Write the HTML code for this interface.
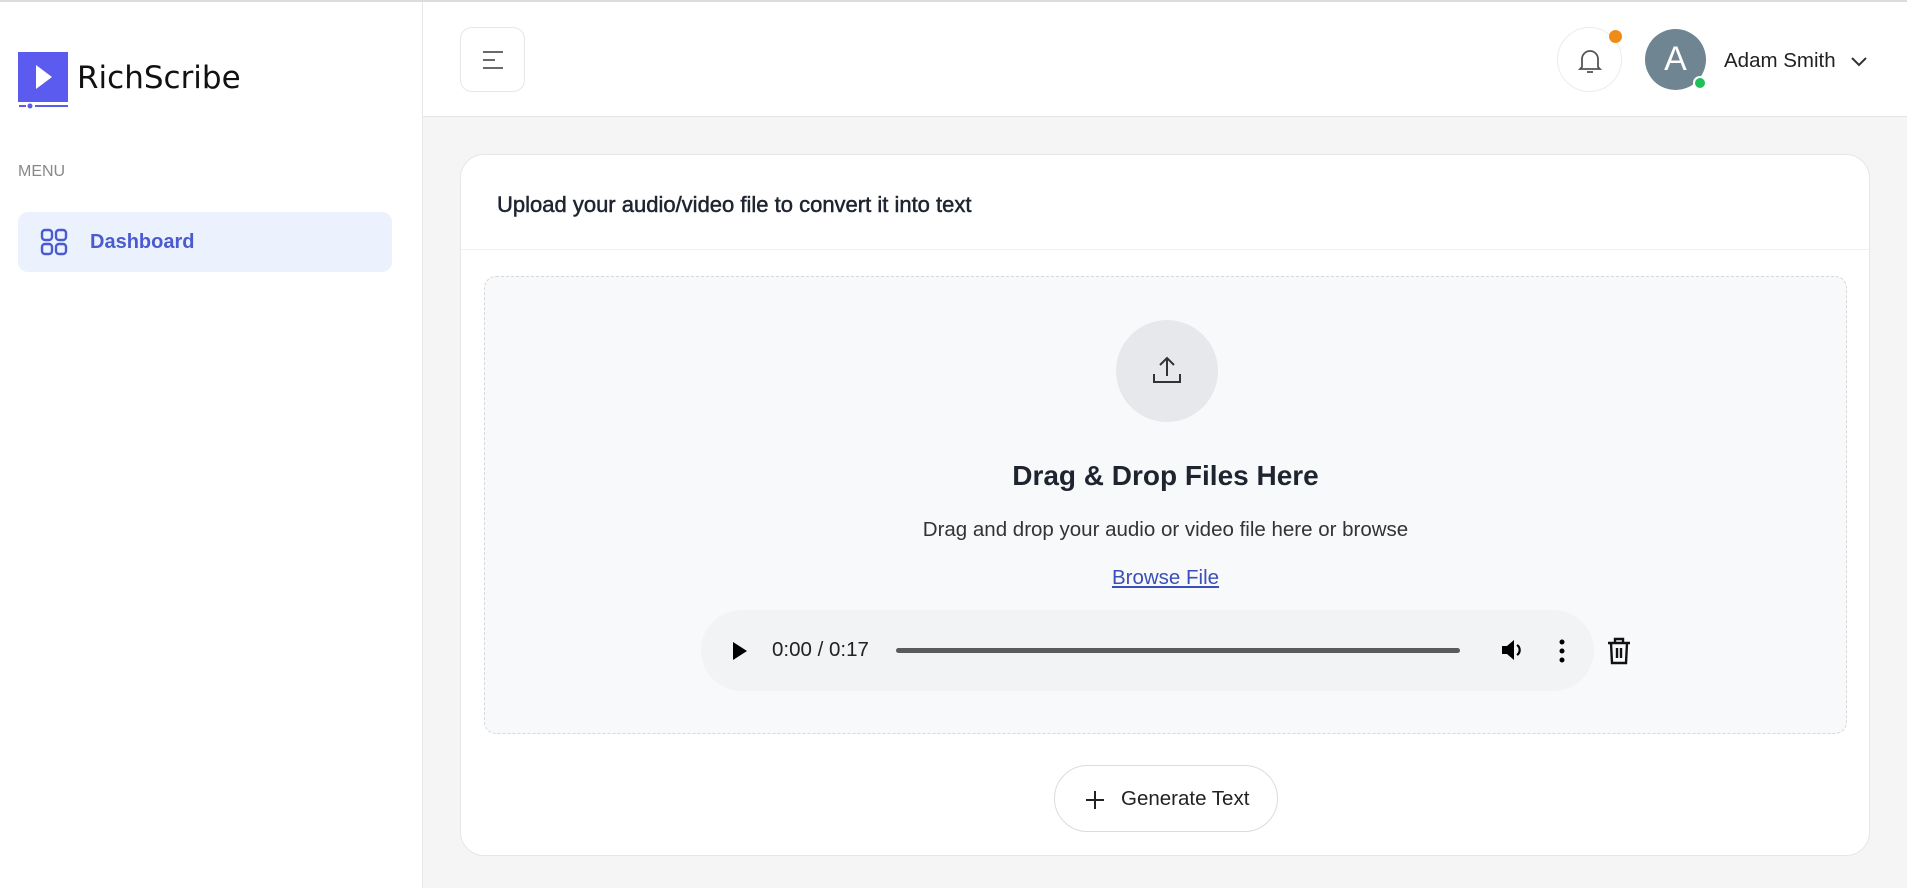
<!DOCTYPE html>
<html><head><meta charset="utf-8"><style>
*{box-sizing:border-box;margin:0;padding:0}
body{width:1907px;height:888px;overflow:hidden;font-family:"Liberation Sans",sans-serif;background:#f5f5f5;color:#1f2530;position:relative}
.top{position:absolute;left:0;top:0;width:1907px;height:2px;background:#dcdcdc}
.side{position:absolute;left:0;top:2px;width:423px;height:886px;background:#fff;border-right:1px solid #e8e8e8}
.hdr{position:absolute;left:423px;top:2px;width:1484px;height:115px;background:#fff;border-bottom:1px solid #e4e4e4}
.card{position:absolute;left:460px;top:154px;width:1410px;height:702px;background:#fff;border:1px solid #e6e6e6;border-radius:24px}
</style></head><body>
<div class="top"></div>
<div class="side">
 <svg style="position:absolute;left:18px;top:50px" width="52" height="60" viewBox="0 0 52 60">
  <rect x="0" y="0" width="50" height="50" fill="#5b5bf0"/>
  <path d="M18 13 L34 25 L18 37 Z" fill="#fff"/>
  <rect x="1" y="53" width="7" height="2" fill="#5b5bf0"/><circle cx="12" cy="54" r="2.5" fill="#5b5bf0"/><rect x="17" y="53" width="33" height="2" fill="#5b5bf0"/>
 </svg>
 <div style="position:absolute;left:77px;top:58px;font-family:'Comic Sans MS','DejaVu Sans',sans-serif;font-size:31px;color:#111">RichScribe</div>
 <div style="position:absolute;left:18px;top:161px;font-size:16px;color:#888">MENU</div>
 <div style="position:absolute;left:18px;top:210px;width:374px;height:60px;background:#ecf2fd;border-radius:10px">
  <svg style="position:absolute;left:22px;top:16px" width="28" height="28" viewBox="0 0 28 28" fill="none" stroke="#4a5bd0" stroke-width="2.4">
   <rect x="2" y="2" width="10" height="10" rx="3"/><rect x="16" y="2" width="10" height="10" rx="3"/><rect x="2" y="16" width="10" height="10" rx="3"/><rect x="16" y="16" width="10" height="10" rx="3"/>
  </svg>
  <div style="position:absolute;left:72px;top:19px;font-size:20px;font-weight:bold;color:#4a5bd0">Dashboard</div>
 </div>
</div>
<div class="hdr">
 <div style="position:absolute;left:37px;top:25px;width:65px;height:65px;border:1px solid #e6e6e6;border-radius:12px">
  <svg style="position:absolute;left:21px;top:22px" width="22" height="20" viewBox="0 0 22 20" stroke="#555" stroke-width="1.8"><path d="M1 2H21M1 10H13M1 18H21"/></svg>
 </div>
 <div style="position:absolute;left:1134px;top:25px;width:65px;height:65px;border:1px solid #ececec;border-radius:50%">
  <svg style="position:absolute;left:20px;top:19px" width="24" height="28" viewBox="0 0 24 28" fill="none" stroke="#555" stroke-width="1.8"><path d="M4 20V12a8 8 0 0 1 16 0v8l2 2H2z"/><path d="M9 25h6"/></svg>
 </div>
 <div style="position:absolute;left:1186px;top:28px;width:13px;height:13px;border-radius:50%;background:#f08c16"></div>
 <div style="position:absolute;left:1222px;top:27px;width:61px;height:61px;border-radius:50%;background:#6f8591;color:#fff;font-size:34px;text-align:center;line-height:61px">A</div>
 <div style="position:absolute;left:1270px;top:74px;width:14px;height:14px;border-radius:50%;background:#1cc15a;border:2px solid #fff"></div>
 <div style="position:absolute;left:1301px;top:47px;font-size:20.5px;color:#222">Adam Smith</div>
 <svg style="position:absolute;left:1427px;top:54px" width="18" height="12" viewBox="0 0 18 12" fill="none" stroke="#333" stroke-width="2"><path d="M2 2l7 7 7-7"/></svg>
</div>
<div class="card">
 <div style="position:absolute;left:36px;top:37px;font-size:22px;-webkit-text-stroke:0.5px #1f2530;color:#1f2530">Upload your audio/video file to convert it into text</div>
 <div style="position:absolute;left:0;top:94px;width:1408px;height:1px;background:#f0f0f0"></div>
 <div style="position:absolute;left:23px;top:121px;width:1363px;height:458px;border:1px dashed #d8d8d8;border-radius:12px;background:#f8f9fb">
  <div style="position:absolute;left:631px;top:43px;width:102px;height:102px;border-radius:50%;background:#e6e8ec">
   <svg style="position:absolute;left:35px;top:34px" width="32" height="32" viewBox="0 0 32 32" fill="none" stroke="#333" stroke-width="2"><path d="M16 22V4M9 11l7-7 7 7M3 20v8h26v-8"/></svg>
  </div>
  <div style="position:absolute;left:0;width:100%;top:183px;text-align:center;font-size:28px;font-weight:bold;color:#1f2530">Drag &amp; Drop Files Here</div>
  <div style="position:absolute;left:0;width:100%;top:241px;text-align:center;font-size:20.5px;color:#333">Drag and drop your audio or video file here or browse</div>
  <div style="position:absolute;left:0;width:100%;top:289px;text-align:center;font-size:20.5px;color:#3b4fb8;text-decoration:underline">Browse File</div>
  <div style="position:absolute;left:216px;top:333px;width:893px;height:81px;border-radius:41px;background:#f1f3f4">
   <svg style="position:absolute;left:32px;top:32px" width="14" height="18"><path d="M0 0L14 9L0 18Z" fill="#000"/></svg>
   <div style="position:absolute;left:71px;top:28px;font-size:20.5px;color:#222">0:00 / 0:17</div>
   <div style="position:absolute;left:195px;top:38px;width:564px;height:5px;border-radius:3px;background:#5a5a5a"></div>
   <svg style="position:absolute;left:799px;top:28px" width="26" height="24" viewBox="0 0 26 24"><path d="M2 8h5l7-6v20l-7-6H2z" fill="#000"/><path d="M17 7a6 6 0 0 1 0 10" stroke="#000" stroke-width="2.2" fill="none"/></svg>
   <svg style="position:absolute;left:858px;top:29px" width="6" height="24"><circle cx="3" cy="3" r="2.5"/><circle cx="3" cy="12" r="2.5"/><circle cx="3" cy="21" r="2.5"/></svg>
  </div>
  <svg style="position:absolute;left:1121px;top:360px" width="26" height="28" viewBox="0 0 26 28" fill="none" stroke="#111" stroke-width="2.4"><path d="M2 6h22M9 6V2h8v4M5 6l1 20h14l1-20M11 11v10M15 11v10"/></svg>
 </div>
 <div style="position:absolute;left:593px;top:610px;width:224px;height:67px;border:1px solid #dcdcdc;border-radius:34px;background:#fff">
  <svg style="position:absolute;left:30px;top:24px" width="20" height="20" stroke="#222" stroke-width="2"><path d="M10 1v18M1 10h18"/></svg>
  <div style="position:absolute;left:66px;top:21px;font-size:20.5px;color:#222">Generate Text</div>
 </div>
</div>
</body></html>
